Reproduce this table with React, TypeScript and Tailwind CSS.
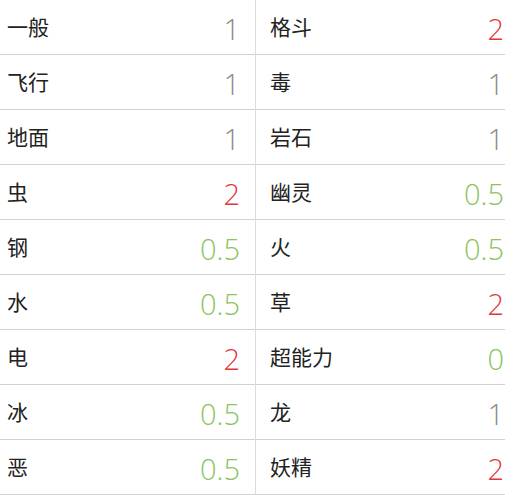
import React from "react";

type Cell = { name: string; value: string };

const left: Cell[] = [
    { name: "一般", value: "1" },
    { name: "飞行", value: "1" },
    { name: "地面", value: "1" },
    { name: "虫", value: "2" },
    { name: "钢", value: "0.5" },
    { name: "水", value: "0.5" },
    { name: "电", value: "2" },
    { name: "冰", value: "0.5" },
    { name: "恶", value: "0.5" },
];

const right: Cell[] = [
    { name: "格斗", value: "2" },
    { name: "毒", value: "1" },
    { name: "岩石", value: "1" },
    { name: "幽灵", value: "0.5" },
    { name: "火", value: "0.5" },
    { name: "草", value: "2" },
    { name: "超能力", value: "0" },
    { name: "龙", value: "1" },
    { name: "妖精", value: "2" },
];

function valueColor(v: string) {
    if (v === "2") return "text-[#e0383e]";
    if (v === "1") return "text-[#8a8a8a]";
    return "text-[#8bc460]";
}

function Row({ cell, side }: { cell: Cell; side: "l" | "r" }) {
    const pad = side === "l" ? "pl-[7px] pr-[15px]" : "pl-[14px] pr-[1px]";
    return (
        <div className={"flex h-[55px] items-center justify-between border-b border-[#d1d1d6] " + pad}>
            <span className="text-[21px] text-[#222] [font-family:'Noto_Sans_CJK_SC',sans-serif]">{cell.name}</span>
            <span className={"text-[29px] font-light leading-none pt-[2px] [font-family:'Open_Sans',sans-serif] " + valueColor(cell.value)}>{cell.value}</span>
        </div>
    );
}

export default function App() {
    return (
        <div className="flex w-[517px] h-[495px] bg-white overflow-hidden">
            <div className="w-[256px] border-r border-[#dcdce0]">
                {left.map((c) => (
                    <Row key={c.name} cell={c} side="l" />
                ))}
            </div>
            <div className="w-[249px]">
                {right.map((c) => (
                    <Row key={c.name} cell={c} side="r" />
                ))}
            </div>
        </div>
    );
}
